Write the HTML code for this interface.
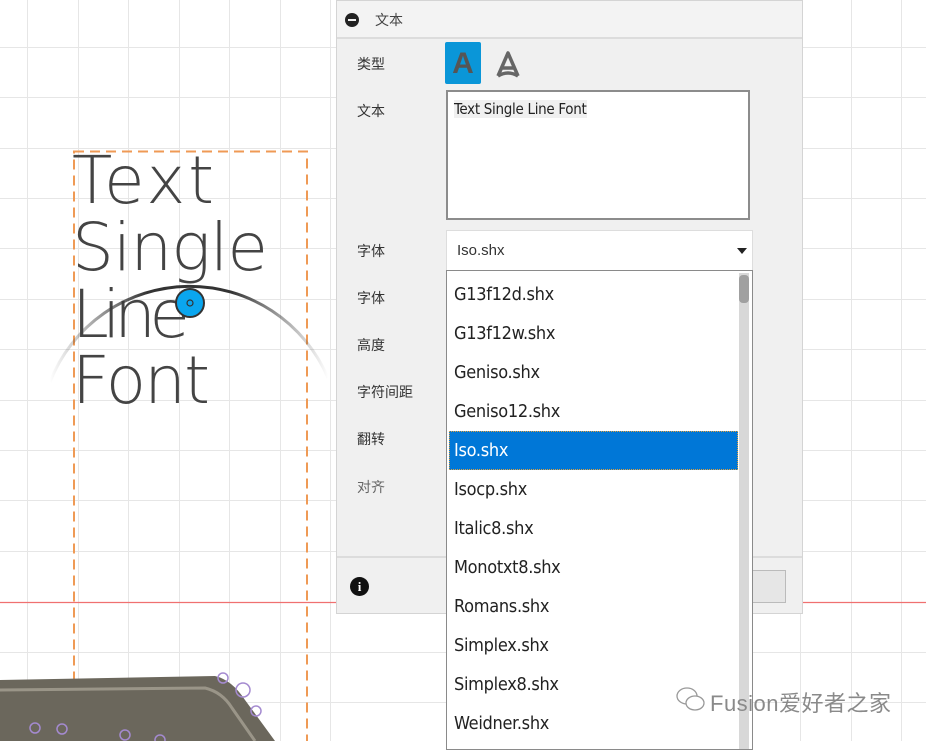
<!DOCTYPE html>
<html><head><meta charset="utf-8"><style>
*{margin:0;padding:0;box-sizing:border-box}
body{width:926px;height:741px;overflow:hidden;position:relative;background:#fff;font-family:"Liberation Sans","Noto Sans CJK SC",sans-serif}
.abs{position:absolute}
.panel{left:336px;top:0;width:467px;height:614px;background:#f0f0f0;border:1px solid #d4d4d4}
.hdr{left:0;top:0;width:465px;height:38px;border-bottom:2px solid #dcdcdc;background:#f3f3f3}
.lbl{font-size:14px;color:#333;left:20px}
.list{left:446px;top:270px;width:307px;height:480px;background:#fff;border:1px solid #8a8a8a}
.it{position:absolute;left:7px;font-size:18px;color:#222;font-family:"DejaVu Sans Condensed","Liberation Sans Narrow",sans-serif;letter-spacing:-0.3px}
</style></head><body>
<svg class="abs" style="left:0;top:0" width="926" height="741">
<g stroke="#e6e6e6" stroke-width="1">
<line x1="27.5" y1="0" x2="27.5" y2="741"/><line x1="78.5" y1="0" x2="78.5" y2="741"/><line x1="128.5" y1="0" x2="128.5" y2="741"/><line x1="179.5" y1="0" x2="179.5" y2="741"/><line x1="229.5" y1="0" x2="229.5" y2="741"/><line x1="280.5" y1="0" x2="280.5" y2="741"/><line x1="330.5" y1="0" x2="330.5" y2="741"/>
<line x1="800.5" y1="0" x2="800.5" y2="741"/><line x1="851.5" y1="0" x2="851.5" y2="741"/><line x1="901.5" y1="0" x2="901.5" y2="741"/>
<line x1="0" y1="47.5" x2="926" y2="47.5"/><line x1="0" y1="97.5" x2="926" y2="97.5"/><line x1="0" y1="148.5" x2="926" y2="148.5"/><line x1="0" y1="198.5" x2="926" y2="198.5"/><line x1="0" y1="248.5" x2="926" y2="248.5"/><line x1="0" y1="299.5" x2="926" y2="299.5"/><line x1="0" y1="349.5" x2="926" y2="349.5"/><line x1="0" y1="400.5" x2="926" y2="400.5"/><line x1="0" y1="450.5" x2="926" y2="450.5"/><line x1="0" y1="500.5" x2="926" y2="500.5"/><line x1="0" y1="551.5" x2="926" y2="551.5"/><line x1="0" y1="652.5" x2="926" y2="652.5"/><line x1="0" y1="702.5" x2="926" y2="702.5"/>
</g>
<line x1="0" y1="602.5" x2="926" y2="602.5" stroke="#f07070" stroke-width="1.2"/>
<rect x="74" y="151.5" width="233" height="600" fill="none" stroke="#ef9a55" stroke-width="2" stroke-dasharray="10,6"/>
<g font-family="DejaVu Sans, sans-serif" font-weight="200" font-size="66" fill="#444" lengthAdjust="spacing">
<text x="72" y="203" textLength="142">Text</text><text x="72" y="270" textLength="196">Single</text><text x="72" y="337" textLength="118">Line</text><text x="72" y="403" textLength="138">Font</text>
</g>
<defs><linearGradient id="ag" x1="0" x2="1"><stop offset="0" stop-color="#444" stop-opacity="0"/><stop offset="0.35" stop-color="#333"/><stop offset="0.65" stop-color="#333"/><stop offset="1" stop-color="#444" stop-opacity="0"/></linearGradient></defs>
<path d="M50 382 A150 150 0 0 1 328 378" fill="none" stroke="url(#ag)" stroke-width="3"/>
<circle cx="190" cy="303" r="14" fill="#0aa6ef" stroke="#333" stroke-width="2"/>
<circle cx="190" cy="303" r="3" fill="none" stroke="#333" stroke-width="1.2"/>
<path d="M0 680 L215 676 Q232 680 245 700 L275 741 L0 741 Z" fill="#6b675c"/>
<path d="M0 690 L205 688 Q222 692 232 708 L255 741" fill="none" stroke="#9a9588" stroke-width="3"/>
<g fill="none" stroke="#a48ad0" stroke-width="1.5"><circle cx="223" cy="678" r="5"/><circle cx="243" cy="690" r="7"/><circle cx="256" cy="711" r="5"/><circle cx="35" cy="728" r="5"/><circle cx="62" cy="729" r="5"/><circle cx="125" cy="735" r="5"/><circle cx="160" cy="740" r="5"/></g>
</svg>

<div class="abs panel">
 <div class="abs hdr"><div class="abs" style="left:8px;top:12px;width:14px;height:14px;border-radius:50%;background:#222"><div class="abs" style="left:3px;top:6px;width:8px;height:2px;background:#f0f0f0"></div></div>
 <div class="abs" style="left:38px;top:9px;font-size:14px;color:#444">文本</div></div>
 <div class="abs lbl" style="top:53px">类型</div>
 <div class="abs" style="left:108px;top:41px;width:36px;height:42px;background:#0a96d8;border-radius:2px;font:bold 30px 'Liberation Sans',sans-serif;color:#555;text-align:center;line-height:44px">A</div>
 <svg class="abs" style="left:158px;top:49px" width="26" height="28"><path d="M3 26 L13 3 L23 26 M7 18 L19 18 M3 26 Q13 20 23 26" fill="none" stroke="#666" stroke-width="3.5" stroke-linejoin="round"/></svg>
 <div class="abs lbl" style="top:100px">文本</div>
 <div class="abs" style="left:109px;top:89px;width:304px;height:130px;background:#fff;border:2px solid #8c8c8c"><span class="abs" style="left:6px;top:8px;font-size:15px;color:#222;background:#f0f0f0;font-family:'DejaVu Sans Condensed',sans-serif;letter-spacing:-0.3px">Text Single Line Font</span></div>
 <div class="abs lbl" style="top:240px">字体</div>
 <div class="abs" style="left:109px;top:229px;width:307px;height:41px;background:#fff;border:1px solid #ddd"><span class="abs" style="left:10px;top:11px;font-size:15px;color:#333">Iso.shx</span><div class="abs" style="left:290px;top:17px;border-left:5px solid transparent;border-right:5px solid transparent;border-top:6px solid #222"></div></div>
 <div class="abs lbl" style="top:287px">字体</div>
 <div class="abs lbl" style="top:334px">高度</div>
 <div class="abs lbl" style="top:381px">字符间距</div>
 <div class="abs lbl" style="top:428px">翻转</div>
 <div class="abs lbl" style="top:476px;color:#666">对齐</div>
 <div class="abs" style="left:0;top:555px;width:465px;height:2px;background:#dcdcdc"></div>
 <div class="abs" style="left:13px;top:576px;width:19px;height:19px;border-radius:50%;background:#111;color:#fff;font:bold 13px 'Liberation Serif',serif;text-align:center;line-height:19px">i</div>
 <div class="abs" style="left:405px;top:569px;width:44px;height:33px;border:1px solid #bbb;background:#e6e6e6"></div>
</div>

<div class="abs list">
 <div class="abs" style="left:292px;top:2px;width:10px;height:476px;background:#d8d8d8"></div>
 <div class="abs" style="left:292px;top:4px;width:10px;height:28px;background:#a0a0a0;border-radius:4px"></div>
 <div class="abs" style="left:2px;top:160px;width:289px;height:39px;background:#0077d7;border:1px dotted #e0a040"></div>
 <div class="it" style="top:13px">G13f12d.shx</div>
 <div class="it" style="top:52px">G13f12w.shx</div>
 <div class="it" style="top:91px">Geniso.shx</div>
 <div class="it" style="top:130px">Geniso12.shx</div>
 <div class="it" style="top:169px;color:#fff">Iso.shx</div>
 <div class="it" style="top:208px">Isocp.shx</div>
 <div class="it" style="top:247px">Italic8.shx</div>
 <div class="it" style="top:286px">Monotxt8.shx</div>
 <div class="it" style="top:325px">Romans.shx</div>
 <div class="it" style="top:364px">Simplex.shx</div>
 <div class="it" style="top:403px">Simplex8.shx</div>
 <div class="it" style="top:442px">Weidner.shx</div>
</div>

<svg class="abs" style="left:676px;top:686px" width="30" height="28"><g fill="none" stroke="#999" stroke-width="1.3"><ellipse cx="11" cy="10" rx="10" ry="8"/><ellipse cx="19" cy="17" rx="9" ry="7" fill="#fff"/></g></svg>
<div class="abs" style="left:710px;top:686px;font-size:22px;color:#8a8a8a;letter-spacing:0.5px">Fusion爱好者之家</div>
</body></html>
